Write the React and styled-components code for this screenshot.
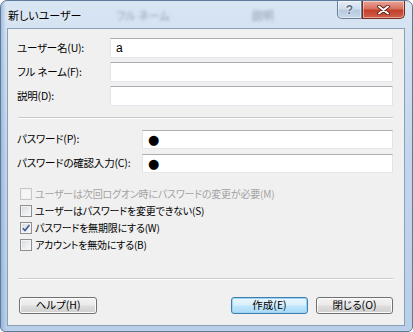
import React from "react";
import styled, { createGlobalStyle } from "styled-components";

const Global = createGlobalStyle`
  html, body { margin: 0; padding: 0; background: #ffffff; }
  body { font-family: "Noto Sans CJK JP", "Noto Sans", sans-serif; }
`;

const JP = `"Noto Sans CJK JP", "Noto Sans", sans-serif`;

const Frame = styled.div`
  width: 413px;
  height: 332px;
  box-sizing: border-box;
  display: flex;
  flex-direction: column;
  padding: 0 7px 5px 6px;
  border: 1px solid #5f7a99;
  border-radius: 7px 7px 5px 5px;
  background:
    linear-gradient(90deg, rgba(120,160,205,0.55) 0px, rgba(120,160,205,0) 5px),
    linear-gradient(180deg, #d8e5f3 0%, #c3d6eb 45%, #b9cfe8 100%);
  font-family: ${JP};
  font-feature-settings: "palt";
`;

const TitleBar = styled.div`
  height: 27px;
  display: flex;
  align-items: center;
`;

const Title = styled.span`
  font-size: 11px;
  color: #000;
  padding-left: 1px;
  margin-top: 1px;
  text-shadow: 0 0 6px rgba(255,255,255,0.9);
`;

const Ghost = styled.span`
  font-size: 11px;
  color: #7a8796;
  filter: blur(1.4px);
  opacity: 0.75;
  margin-left: ${p => p.$ml}px;
`;

const CaptionButtons = styled.div`
  margin-left: auto;
  align-self: flex-start;
  display: flex;
  height: 18px;
`;

const CapButton = styled.div`
  width: ${p => p.$w}px;
  height: 18px;
  box-sizing: border-box;
  display: flex;
  align-items: center;
  justify-content: center;
  border: 1px solid ${p => (p.$close ? "#7a2a20" : "#6a7f98")};
  border-top: none;
  border-radius: ${p => (p.$close ? "0 0 5px 0" : "0 0 0 5px")};
  background: ${p =>
    p.$close
      ? "linear-gradient(180deg, #e8a597 0%, #d8715f 45%, #c2402b 55%, #d0604a 100%)"
      : "linear-gradient(180deg, #e6eef7 0%, #cfdcea 45%, #b8cadf 55%, #c9d8e9 100%)"};
  box-shadow: inset 0 0 0 1px rgba(255,255,255,0.45);
`;

const HelpGlyph = styled.span`
  font-family: "Liberation Sans", sans-serif;
  font-weight: bold;
  font-size: 12px;
  color: #5a6b80;
  text-shadow: 0 0 2px #ffffff, 0 0 1px #ffffff;
  line-height: 1;
`;

const Client = styled.div`
  flex: 1;
  display: flex;
  flex-direction: column;
  background: #f0f0f0;
  border: 1px solid #8aa0ba;
  padding: 9px 11px 0 9px;
  font-size: 11px;
  color: #000;
`;

const FieldGrid = styled.div`
  display: grid;
  grid-template-columns: ${p => p.$label}px 1fr;
  grid-auto-rows: ${p => p.$h}px;
  row-gap: ${p => p.$gap}px;
  align-items: center;
  margin-top: ${p => p.$mt}px;
`;

const Label = styled.label`
  font-size: 10.5px;
  line-height: 1;
  white-space: nowrap;
  letter-spacing: -0.2px;
`;

const TextBox = styled.div`
  height: 100%;
  box-sizing: border-box;
  background: #ffffff;
  border: 1px solid #e2e3ea;
  border-top-color: #abadb3;
  border-bottom-color: #e3e9ef;
  display: flex;
  align-items: center;
  padding-left: 5px;
  font-size: 12px;
  font-family: "Liberation Sans", ${JP};
`;

const Bullet = styled.span`
  font-family: "DejaVu Sans", sans-serif;
  font-size: 13px;
  line-height: 1;
  margin-top: -1px;
`;

const Separator = styled.div`
  height: 0;
  border-top: 1px solid #c6cbd0;
  border-bottom: 1px solid #ffffff;
  margin-top: ${p => p.$mt}px;
  margin-left: 1px;
`;

const Checks = styled.div`
  display: flex;
  flex-direction: column;
  margin-top: 12px;
  padding-left: 3px;
`;

const CheckRow = styled.div`
  height: 17px;
  display: flex;
  align-items: center;
  gap: 3px;
  color: ${p => (p.$disabled ? "#a3a3a3" : "#000")};
  font-size: 10px;
  letter-spacing: -0.2px;
  white-space: nowrap;
`;

const Box = styled.span`
  width: 12px;
  height: 12px;
  box-sizing: border-box;
  flex: none;
  border: 1px solid ${p => (p.$disabled ? "#c8c8c8" : "#8e8f8f")};
  background: ${p =>
    p.$disabled
      ? "#f6f6f6"
      : "linear-gradient(135deg, #d6d9de 0%, #eceef0 60%, #f9f9f9 100%)"};
  box-shadow: inset 0 0 0 1px ${p => (p.$disabled ? "#f0f0f0" : "#f4f4f4")};
  display: flex;
  align-items: center;
  justify-content: center;
`;

const ButtonRow = styled.div`
  display: flex;
  justify-content: space-between;
  margin-top: 17px;
  padding-left: 2px;
`;

const RightButtons = styled.div`
  display: flex;
  gap: 8px;
`;

const Button = styled.button`
  width: ${p => p.$w}px;
  height: 17px;
  box-sizing: border-box;
  padding: 0;
  border: 1px solid ${p => (p.$default ? "#3c7fb1" : "#707070")};
  border-radius: 3px;
  background: ${p =>
    p.$default
      ? "linear-gradient(180deg, #eaf6fd 0%, #d9f0fc 45%, #bee6fd 55%, #a7d9f5 100%)"
      : "linear-gradient(180deg, #f2f2f2 0%, #ebebeb 45%, #dddddd 55%, #cfcfcf 100%)"};
  box-shadow: inset 0 0 0 1px ${p => (p.$default ? "#9ed4f0" : "#fbfbfb")};
  font-family: ${JP};
  font-feature-settings: "palt";
  font-size: 10.5px;
  line-height: 1;
  color: #000;
  display: flex;
  align-items: center;
  justify-content: center;
`;

const CloseIcon = () => (
  <svg width="13" height="10" viewBox="0 0 13 10">
    <path d="M2 1.5 L11 8.5 M11 1.5 L2 8.5" stroke="#5b1a12" strokeWidth="3.6" strokeLinecap="round" />
    <path d="M2 1.5 L11 8.5 M11 1.5 L2 8.5" stroke="#ffffff" strokeWidth="2" strokeLinecap="round" />
  </svg>
);

const CheckMark = () => (
  <svg width="10" height="10" viewBox="0 0 10 10">
    <path d="M1.8 5.2 L4 7.6 L8.4 2" fill="none" stroke="#3d5a9a" strokeWidth="1.6" />
  </svg>
);

const checks = [
  { text: "ユーザーは次回ログオン時にパスワードの変更が必要(M)", disabled: true },
  { text: "ユーザーはパスワードを変更できない(S)" },
  { text: "パスワードを無期限にする(W)", checked: true },
  { text: "アカウントを無効にする(B)" },
];

export default function App() {
  return (
    <>
      <Global />
      <Frame>
        <TitleBar>
          <Title>新しいユーザー</Title>
          <Ghost $ml={35}>フル ネーム</Ghost>
          <Ghost $ml={82}>説明</Ghost>
          <CaptionButtons>
            <CapButton $w={25}>
              <HelpGlyph>?</HelpGlyph>
            </CapButton>
            <CapButton $w={43} $close>
              <CloseIcon />
            </CapButton>
          </CaptionButtons>
        </TitleBar>
        <Client>
          <FieldGrid $label={93} $h={20} $gap={4} $mt={0}>
            <Label>ユーザー名(U):</Label>
            <TextBox>a</TextBox>
            <Label>フル ネーム(F):</Label>
            <TextBox />
            <Label>説明(D):</Label>
            <TextBox />
          </FieldGrid>
          <Separator $mt={11} />
          <FieldGrid $label={125} $h={19} $gap={5} $mt={11}>
            <Label>パスワード(P):</Label>
            <TextBox>
              <Bullet>●</Bullet>
            </TextBox>
            <Label>パスワードの確認入力(C):</Label>
            <TextBox>
              <Bullet>●</Bullet>
            </TextBox>
          </FieldGrid>
          <Checks>
            {checks.map(c => (
              <CheckRow key={c.text} $disabled={c.disabled}>
                <Box $disabled={c.disabled}>{c.checked && <CheckMark />}</Box>
                <span>{c.text}</span>
              </CheckRow>
            ))}
          </Checks>
          <Separator $mt={25} />
          <ButtonRow>
            <Button $w={78}>ヘルプ(H)</Button>
            <RightButtons>
              <Button $w={77} $default>作成(E)</Button>
              <Button $w={77}>閉じる(O)</Button>
            </RightButtons>
          </ButtonRow>
        </Client>
      </Frame>
    </>
  );
}
